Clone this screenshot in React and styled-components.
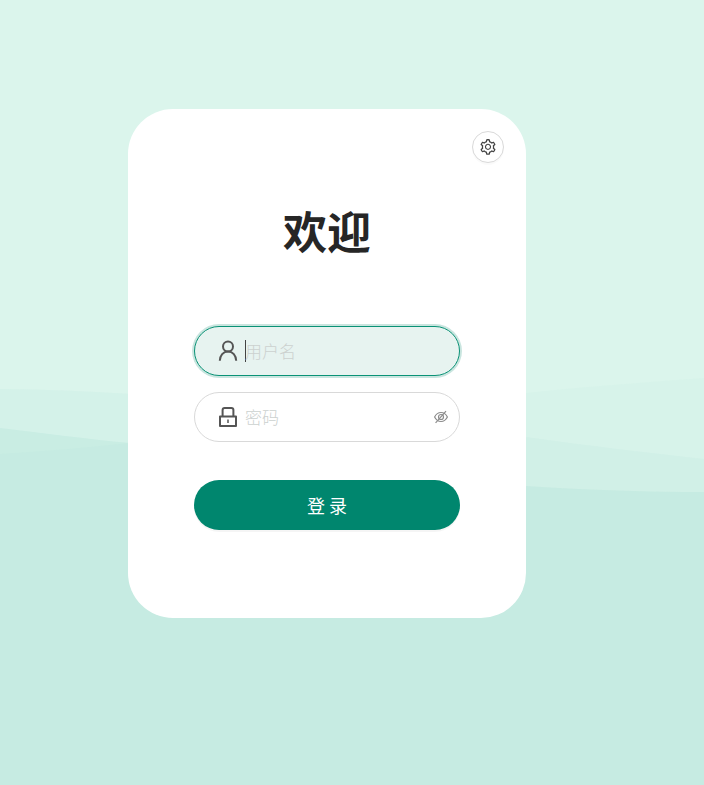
import React, { useState } from 'react';
import styled, { createGlobalStyle, css } from 'styled-components';
import { AiOutlineSetting } from 'react-icons/ai';

const GlobalStyle = createGlobalStyle`
  *, *::before, *::after { box-sizing: border-box; }
  body {
    margin: 0;
    background: #dbf5ec;
    color: #262626;
    font-family: "Noto Sans CJK SC", "Liberation Sans", sans-serif;
  }
`;

const Page = styled.main`
  position: relative;
  isolation: isolate;
  display: flex;
  align-items: center;
  justify-content: center;
  min-height: 100vh;
  padding: 24px 50px 82px 0;
  overflow: hidden;
`;

const Waves = styled.svg`
  position: absolute;
  inset: 0;
  z-index: -1;
  width: 100%;
  height: 100%;
`;

const Card = styled.section`
  display: flex;
  flex-direction: column;
  width: 100%;
  max-width: 398px;
  padding: 22px 22px 88px;
  border-radius: 45px;
  background: #fff;
`;

const SettingsButton = styled.button`
  display: flex;
  align-items: center;
  justify-content: center;
  align-self: flex-end;
  width: 32px;
  height: 32px;
  padding: 0;
  border: 1px solid #d9d9d9;
  border-radius: 50%;
  background: #fff;
  box-shadow: 0 2px 0 rgba(0, 0, 0, 0.02);
  color: #434343;
  cursor: pointer;
`;

const Title = styled.h1`
  margin: 34px 0 63px;
  font-size: 44px;
  font-weight: 700;
  line-height: 66px;
  text-align: center;
`;

const Form = styled.form`
  display: flex;
  flex-direction: column;
  gap: 16px;
  padding: 0 44px;
`;

const Field = styled.label`
  display: flex;
  align-items: center;
  height: 50px;
  padding: 0 11px 0 23px;
  border: 1px solid #d9d9d9;
  border-radius: 25px;
  background: #fff;
  color: #555;
  cursor: text;

  ${({ $active }) => $active && css`
    border-color: #0a9276;
    background: #e7f3f0;
    box-shadow: 0 0 0 2px #c9e5df;
  `}
`;

const FieldIcon = styled.svg`
  flex: none;
  width: 20px;
  height: 22px;
  margin-right: 7px;
  fill: none;
  stroke: currentColor;
  stroke-width: 2;
`;

const Caret = styled.span`
  width: 1px;
  height: 22px;
  margin-right: -1px;
  background: #434343;
`;

const Input = styled.input`
  flex: 1;
  min-width: 0;
  padding: 0;
  border: 0;
  outline: 0;
  background: transparent;
  color: #262626;
  caret-color: ${({ $drawnCaret }) => ($drawnCaret ? 'transparent' : 'auto')};
  font: 300 17px/24px "Noto Sans CJK SC", "Liberation Sans", sans-serif;

  &::placeholder {
    color: #ccd1cf;
    opacity: 1;
  }
`;

const RevealButton = styled.button`
  display: flex;
  padding: 0;
  border: 0;
  background: none;
  color: #8c8c8c;
  cursor: pointer;
`;

const SubmitButton = styled.button`
  height: 50px;
  margin-top: 22px;
  padding: 0;
  border: 0;
  border-radius: 25px;
  background: #00866e;
  box-shadow: 0 2px 0 rgba(0, 0, 0, 0.04);
  color: #fff;
  font: 400 18px/24px "Noto Sans CJK SC", "Liberation Sans", sans-serif;
  cursor: pointer;
`;

function UserIcon() {
  return (
    <FieldIcon viewBox="0 0 20 22" aria-hidden="true">
      <circle cx="10" cy="6.500" r="5" />
      <path d="M1.800 20.800C2 15.500 5.200 11.600 10 11.600S18 15.500 18.200 20.800" />
    </FieldIcon>
  );
}

function LockIcon() {
  return (
    <FieldIcon viewBox="0 0 20 22" aria-hidden="true">
      <path d="M2 10.500H18V20H2Z" strokeLinejoin="round" />
      <path d="M4.600 10V4Q4.600 2 6.600 2H13.400Q15.400 2 15.400 4V10" />
      <path d="M10 13.500V17" strokeWidth="1.500" />
    </FieldIcon>
  );
}

function EyeOffIcon() {
  return (
    <svg width="14" height="14" viewBox="0 0 14 14" fill="none" stroke="currentColor" strokeWidth="1.200" aria-hidden="true">
      <path d="M.6 7C2 4.200 4.200 2.500 7 2.500S12 4.200 13.400 7C12 9.800 9.800 11.500 7 11.500S2 9.800 .6 7Z" />
      <circle cx="7" cy="7" r="2.500" />
      <path d="M1.600 12.800 12 1.200" />
    </svg>
  );
}

export default function App() {
  const [active, setActive] = useState('username');
  const [username, setUsername] = useState('');
  const [password, setPassword] = useState('');
  const [visible, setVisible] = useState(false);
  const showCaret = active === 'username' && username === '';

  return (
    <>
      <GlobalStyle />
      <Page>
        <Waves viewBox="0 0 704 785" preserveAspectRatio="none" aria-hidden="true">
          <path d="M0 389C90 390 170 396 260 404C360 413 440 425 526 437C590 446 650 453 704 459V785H0Z" fill="#a6dcd7" fillOpacity=".12" />
          <path d="M0 454C50 451 90 447 130 443C270 428 390 407 526 393C590 386 650 382 704 378V785H0Z" fill="#a6dcd7" fillOpacity=".07" />
          <path d="M0 428C45 433 85 439 130 443C270 459 390 477 526 486C590 490 650 492 704 492V785H0Z" fill="#8fd2c9" fillOpacity=".16" />
        </Waves>
        <Card>
          <SettingsButton type="button" aria-label="设置">
            <AiOutlineSetting size={18} />
          </SettingsButton>
          <Title>欢迎</Title>
          <Form onSubmit={(event) => event.preventDefault()}>
            <Field $active={active === 'username'}>
              <UserIcon />
              {showCaret && <Caret />}
              <Input
                aria-label="用户名"
                placeholder="用户名"
                autoComplete="username"
                autoFocus
                $drawnCaret={showCaret}
                value={username}
                onChange={(event) => setUsername(event.target.value)}
                onFocus={() => setActive('username')}
              />
            </Field>
            <Field $active={active === 'password'}>
              <LockIcon />
              <Input
                aria-label="密码"
                placeholder="密码"
                type={visible ? 'text' : 'password'}
                autoComplete="current-password"
                value={password}
                onChange={(event) => setPassword(event.target.value)}
                onFocus={() => setActive('password')}
              />
              <RevealButton type="button" aria-label="显示密码" onClick={() => setVisible(!visible)}>
                <EyeOffIcon />
              </RevealButton>
            </Field>
            <SubmitButton type="submit">登 录</SubmitButton>
          </Form>
        </Card>
      </Page>
    </>
  );
}
